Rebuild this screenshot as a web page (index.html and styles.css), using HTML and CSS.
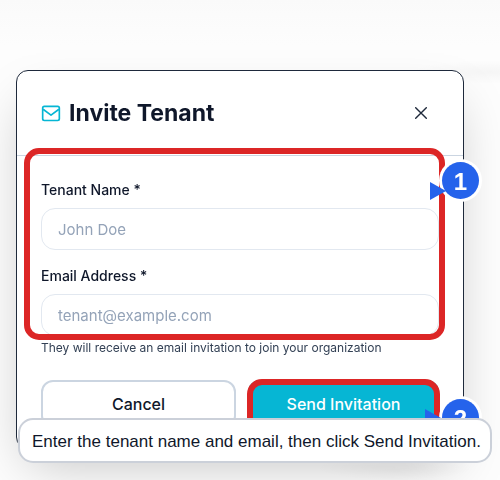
FILE: index.html
```
<!DOCTYPE html>
<html lang="en">
<head>
    <meta charset="UTF-8">
    <meta name="viewport" content="width=device-width, initial-scale=1.0">
    <title>Invite Tenant</title>
    <link rel="stylesheet" href="styles.css">
</head>
<body>

<div class="backdrop"></div>

<main class="modal" role="dialog" aria-labelledby="modal-title">
    <header class="modal-header">
        <svg class="mail-icon" viewBox="0 0 24 24" aria-hidden="true">
            <rect x="2" y="4" width="20" height="17" rx="2"/>
            <path d="M2.5 7.5 L12 14.5 L21.5 7.5"/>
        </svg>
        <h1 class="modal-title" id="modal-title">Invite Tenant</h1>
        <button class="close" type="button" aria-label="Close">
            <svg viewBox="0 0 12 12" aria-hidden="true">
                <path d="M0.7 0.7 L11.3 11.3 M11.3 0.7 L0.7 11.3"/>
            </svg>
        </button>
    </header>

    <form class="modal-body">
        <div class="fields">
            <div class="field">
                <label for="tenant-name">Tenant Name *</label>
                <input id="tenant-name" type="text" placeholder="John Doe">
            </div>
            <div class="field">
                <label for="tenant-email">Email Address *</label>
                <input id="tenant-email" type="email" placeholder="tenant@example.com">
            </div>
            <div class="highlight highlight-fields"></div>
            <div class="step step-fields">
                <span class="number">1</span>
                <span class="arrow"></span>
            </div>
        </div>
        <p class="hint">They will receive an email invitation to join your organization</p>

        <div class="actions">
            <button class="btn btn-cancel" type="button">Cancel</button>
            <button class="btn btn-send" type="button">Send Invitation</button>
            <div class="highlight highlight-send"></div>
            <div class="step step-send">
                <span class="number">2</span>
                <span class="arrow"></span>
            </div>
        </div>
    </form>
</main>

<div class="caption">Enter the tenant name and email, then click Send Invitation.</div>

</body>
</html>
```
FILE: styles.css
```
* {
    box-sizing: border-box;
}

body {
    margin: 0;
    min-height: 100vh;
    padding: 70px 36px 0 16px;
    overflow: hidden;
    background: #fdfdfd;
    color: #0f172a;
    font-family: Inter, "Liberation Sans", sans-serif;
}

/* Blurred page behind the modal */
.backdrop {
    position: fixed;
    inset: 0;
    background:
        radial-gradient(ellipse 80px 12px at 490px 72px, rgba(0, 0, 0, 0.03), transparent),
        radial-gradient(ellipse 80px 12px at 395px 468px, rgba(0, 0, 0, 0.03), transparent),
        linear-gradient(#fafafa, #fdfdfd 45px);
}

.modal {
    position: relative;
    background: #fff;
    border: 1px solid #1e293b;
    border-radius: 12px;
    box-shadow: 0 25px 50px -12px rgba(0, 0, 0, 0.25);
}

/* Header */
.modal-header {
    display: flex;
    align-items: center;
    gap: 8px;
    padding: 24px;
    border-bottom: 1px solid #cbd5e1;
}

.mail-icon {
    width: 20px;
    height: 20px;
    fill: none;
    stroke: #06b6d4;
    stroke-width: 2;
    stroke-linejoin: round;
}

.modal-title {
    flex: 1;
    margin: 0;
    font-size: 23px;
    line-height: 32px;
    font-weight: 700;
}

.close {
    display: flex;
    align-items: center;
    justify-content: center;
    width: 36px;
    height: 36px;
    padding: 0;
    border: 0;
    background: none;
}

.close svg {
    width: 12px;
    height: 12px;
    fill: none;
    stroke: #1e293b;
    stroke-width: 1.4;
    stroke-linecap: round;
}

/* Form */
.modal-body {
    padding: 24px 24px 20px;
}

.fields {
    position: relative;
    display: flex;
    flex-direction: column;
    gap: 16px;
}

.field {
    display: flex;
    flex-direction: column;
    gap: 8px;
}

.field label {
    font-size: 14px;
    line-height: 20px;
    font-weight: 500;
}

.field input {
    width: 100%;
    height: 42px;
    padding: 0 16px;
    border: 1px solid #e2e8f0;
    border-radius: 14px;
    background: #fff;
    font-family: inherit;
    font-size: 15px;
    color: #0f172a;
}

.field input::placeholder {
    color: #94a3b8;
    opacity: 1;
}

.hint {
    margin: 4px 0 24px;
    font-size: 12px;
    line-height: 16px;
    color: #334155;
}

.actions {
    position: relative;
    display: flex;
    gap: 12px;
}

.btn {
    flex: 1;
    height: 48px;
    padding: 0 16px;
    border: 0;
    border-radius: 12px;
    font-family: inherit;
    font-size: 16px;
    font-weight: 500;
}

.btn-cancel {
    border: 2px solid #cbd5e1;
    background: #fff;
    color: #0f172a;
}

.btn-send {
    background: #06b6d4;
    color: #fff;
}

/* Step markers */
.highlight {
    position: absolute;
    border: 6px solid #dc2626;
    border-radius: 15px;
    pointer-events: none;
}

.highlight-fields {
    inset: -32px -6px -4px -17px;
}

.highlight-send {
    top: -1px;
    right: -1px;
    width: 193px;
    height: 54px;
}

.step {
    position: absolute;
    width: 37px;
    height: 37px;
    border-radius: 50%;
    background: #2563eb;
    box-shadow: 0 0 0 3px #fff;
}

.step-fields {
    top: -18px;
    right: -40px;
}

.step-send {
    top: 19px;
    right: -40px;
}

.number {
    display: block;
    color: #fff;
    font-family: "Liberation Sans", Arial, sans-serif;
    font-size: 24px;
    line-height: 40px;
    font-weight: 700;
    text-align: center;
}

.arrow {
    position: absolute;
    top: 20px;
    left: -12px;
    border: 9px solid transparent;
    border-left: 16px solid #2563eb;
    border-right: 0;
}

.step-send .arrow {
    top: 10px;
    left: -17px;
}

/* Caption over the bottom of the modal */
.caption {
    position: fixed;
    left: 18px;
    right: 8px;
    bottom: 17px;
    padding: 11px 12px 9px;
    border: 2px solid #cbd0d9;
    border-radius: 15px;
    background: #fff;
    font-family: "Liberation Sans", Arial, sans-serif;
    font-size: 17px;
    line-height: 21px;
    white-space: nowrap;
}
```
